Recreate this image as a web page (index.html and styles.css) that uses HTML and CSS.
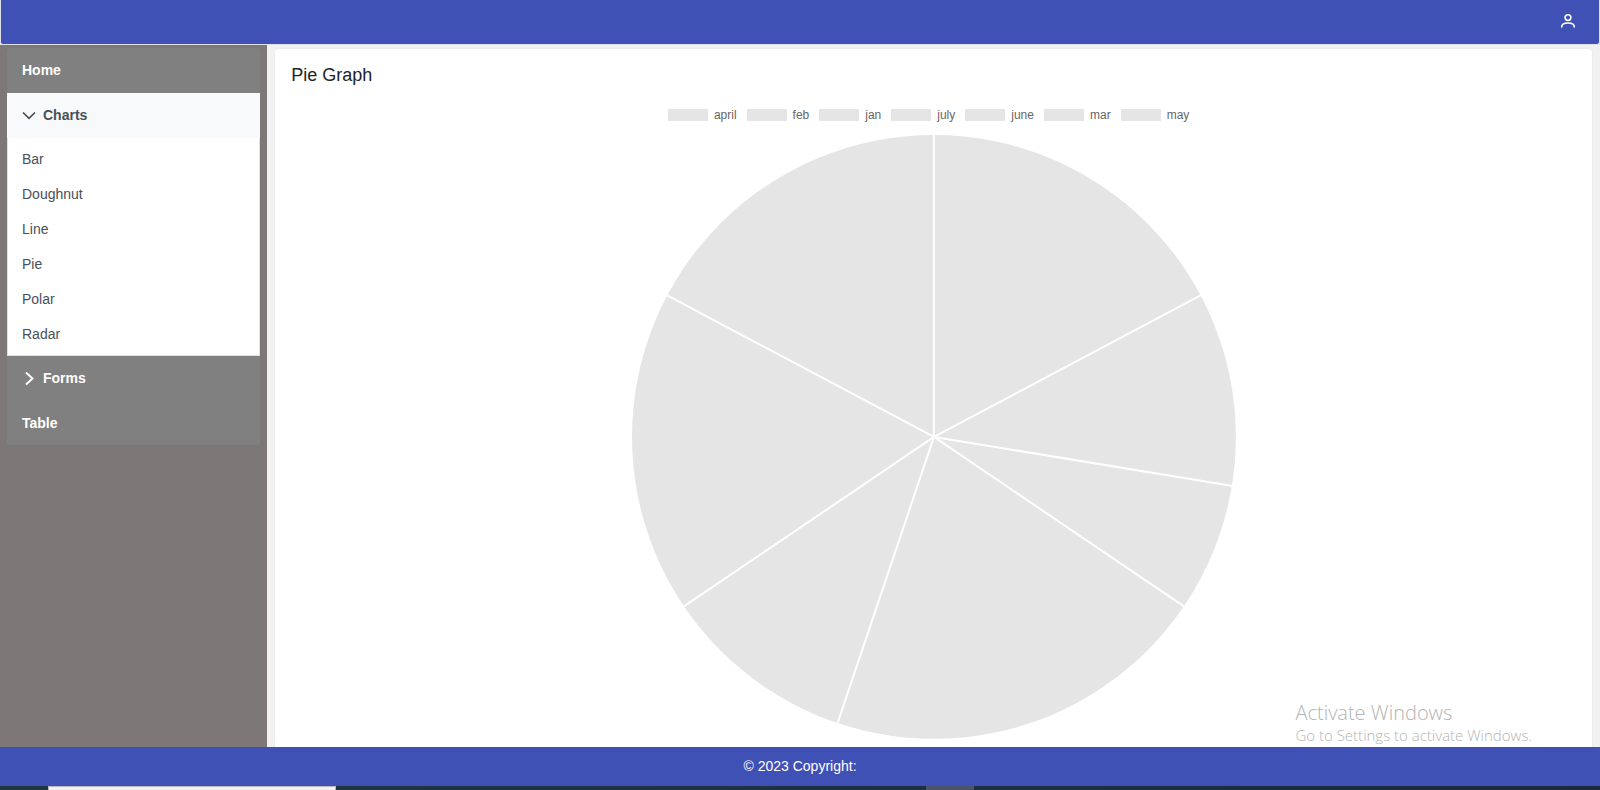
FILE: index.html
```html
<!DOCTYPE html>
<html lang="en">
<head>
<meta charset="utf-8">
<title>Pie Graph</title>
<link rel="stylesheet" href="styles.css">
</head>
<body>
<div class="screen">
  <header class="topbar">
    <button class="user-button" type="button" aria-label="User">
      <svg viewBox="0 0 16 16" width="16" height="16" fill="none" stroke="currentColor" stroke-width="1.6" stroke-linecap="round"><circle cx="8" cy="4.600" r="2.900"/><path d="M1.700 13.900C1.700 11 4.300 10 8 10s6.300 1 6.300 3.900"/></svg>
    </button>
  </header>
  <div class="body">
    <nav class="sidebar">
      <div class="menu">
        <a class="menu-head" href="#home">Home</a>
        <a class="menu-head open" href="#charts"><svg class="chevron" viewBox="0 0 14 14" width="14" height="14" fill="none" stroke="currentColor" stroke-width="1.7"><path d="M1 3.500l6 5.800 6-5.800"/></svg>Charts</a>
        <div class="submenu">
          <a href="#bar">Bar</a>
          <a href="#doughnut">Doughnut</a>
          <a href="#line">Line</a>
          <a href="#pie">Pie</a>
          <a href="#polar">Polar</a>
          <a href="#radar">Radar</a>
        </div>
        <a class="menu-head" href="#forms"><svg class="chevron" viewBox="0 0 14 14" width="14" height="14" fill="none" stroke="currentColor" stroke-width="2"><path d="M4 0.500l6.500 6-6.500 6"/></svg>Forms</a>
        <a class="menu-head" href="#table">Table</a>
      </div>
    </nav>
    <main class="content">
      <section class="card">
        <h1>Pie Graph</h1>
        <div class="chart">
          <ul class="legend">
            <li>april</li><li>feb</li><li>jan</li><li>july</li><li>june</li><li>mar</li><li>may</li>
          </ul>
          <svg class="pie" viewBox="-302 -302 604 604" role="img" aria-label="Pie chart">
            <circle r="302" fill="#e5e5e5"/>
            <path d="M0 0V-303M0 0L267.700-142M0 0L299 49M0 0L250.800 170M0 0L-96.700 287.100M0 0L-250.800 170M0 0L-267.700-142" stroke="#fff" stroke-width="2"/>
          </svg>
        </div>
      </section>
    </main>
    <aside class="watermark">
      <p class="watermark-title">Activate Windows</p>
      <p>Go to Settings to activate Windows.</p>
    </aside>
  </div>
  <footer class="footer">© 2023 Copyright:</footer>
  <div class="taskbar"><div class="search"></div><div class="task"></div></div>
</div>
</body>
</html>
```
FILE: styles.css
```css
* { box-sizing: border-box; }
body {
  margin: 0;
  font: 14px/21px "Liberation Sans", Arial, sans-serif;
  background: #f1f1f1;
}
a { color: inherit; text-decoration: none; }
.screen { display: flex; flex-direction: column; height: 100vh; overflow: hidden; }
.topbar {
  flex: none;
  display: flex;
  justify-content: flex-end;
  align-items: center;
  height: 45px;
  padding: 0 23px 2px;
  color: #fff;
  background: #3f51b5;
  border: 1px solid #dee2e6;
  border-top: 0;
  border-radius: 0 0 3px 3px;
}
.user-button { display: flex; padding: 0; border: 0; background: none; color: inherit; }
.body { flex: 1; min-height: 0; display: flex; position: relative; overflow: hidden; }
.sidebar { flex: none; width: 16.7%; padding: 3px 7px; background: #7d7877; }
.menu { border-radius: 3px; overflow: hidden; background: #808080; }
.menu-head {
  display: flex;
  align-items: center;
  height: 45px;
  padding: 0 15px;
  font-weight: 700;
  color: #fff;
}
.menu-head.open { background: #f8f9fa; color: #495057; }
.menu-head + .menu-head:last-child { height: 44px; }
.chevron { margin-right: 7px; }
.submenu { padding: 4px 0 3px; background: #fff; border: 1px solid #dee2e6; border-top: 0; }
.submenu a { display: block; padding: 7px 14px; color: #495057; }
.content { flex: 1; min-width: 0; padding: 4px 8px; }
.card {
  padding: 16px;
  background: #fff;
  border-radius: 3px;
  box-shadow: 0 0 1px rgba(0, 0, 0, 0.2);
}
h1 { margin: 0; font-size: 18px; line-height: 20px; font-weight: 400; color: #212529; }
.chart { display: flex; flex-direction: column; align-items: center; gap: 13px; padding-top: 23px; }
.legend {
  display: flex;
  gap: 10px;
  margin: 0;
  padding: 0 10px 0 0;
  list-style: none;
  font-size: 12px;
  line-height: 14px;
  color: #666;
}
.legend li { display: flex; align-items: center; gap: 6px; }
.legend li::before { content: ""; width: 40px; height: 12px; background: #e5e5e5; }
.pie { display: block; width: 47%; height: auto; margin-bottom: 20px; }
.watermark {
  position: absolute;
  right: 68px;
  bottom: 2px;
  color: #b4b4b4;
  font: 300 15px/20px "Open Sans", "Noto Sans", sans-serif;
}
.watermark p { margin: 0; }
.watermark .watermark-title { font-size: 20px; line-height: 24px; }
.footer { flex: none; padding: 9px; text-align: center; color: #fff; background: #3f51b5; }
.taskbar { flex: none; display: flex; height: 4px; padding-left: 3%; background: linear-gradient(90deg, #203840, #1c2a40); }
.search { width: 288px; background: #f1f1f3; border: 1px solid #bbb; border-bottom: 0; }
.task { width: 48px; margin-left: 590px; background: #4a5566; }
```
